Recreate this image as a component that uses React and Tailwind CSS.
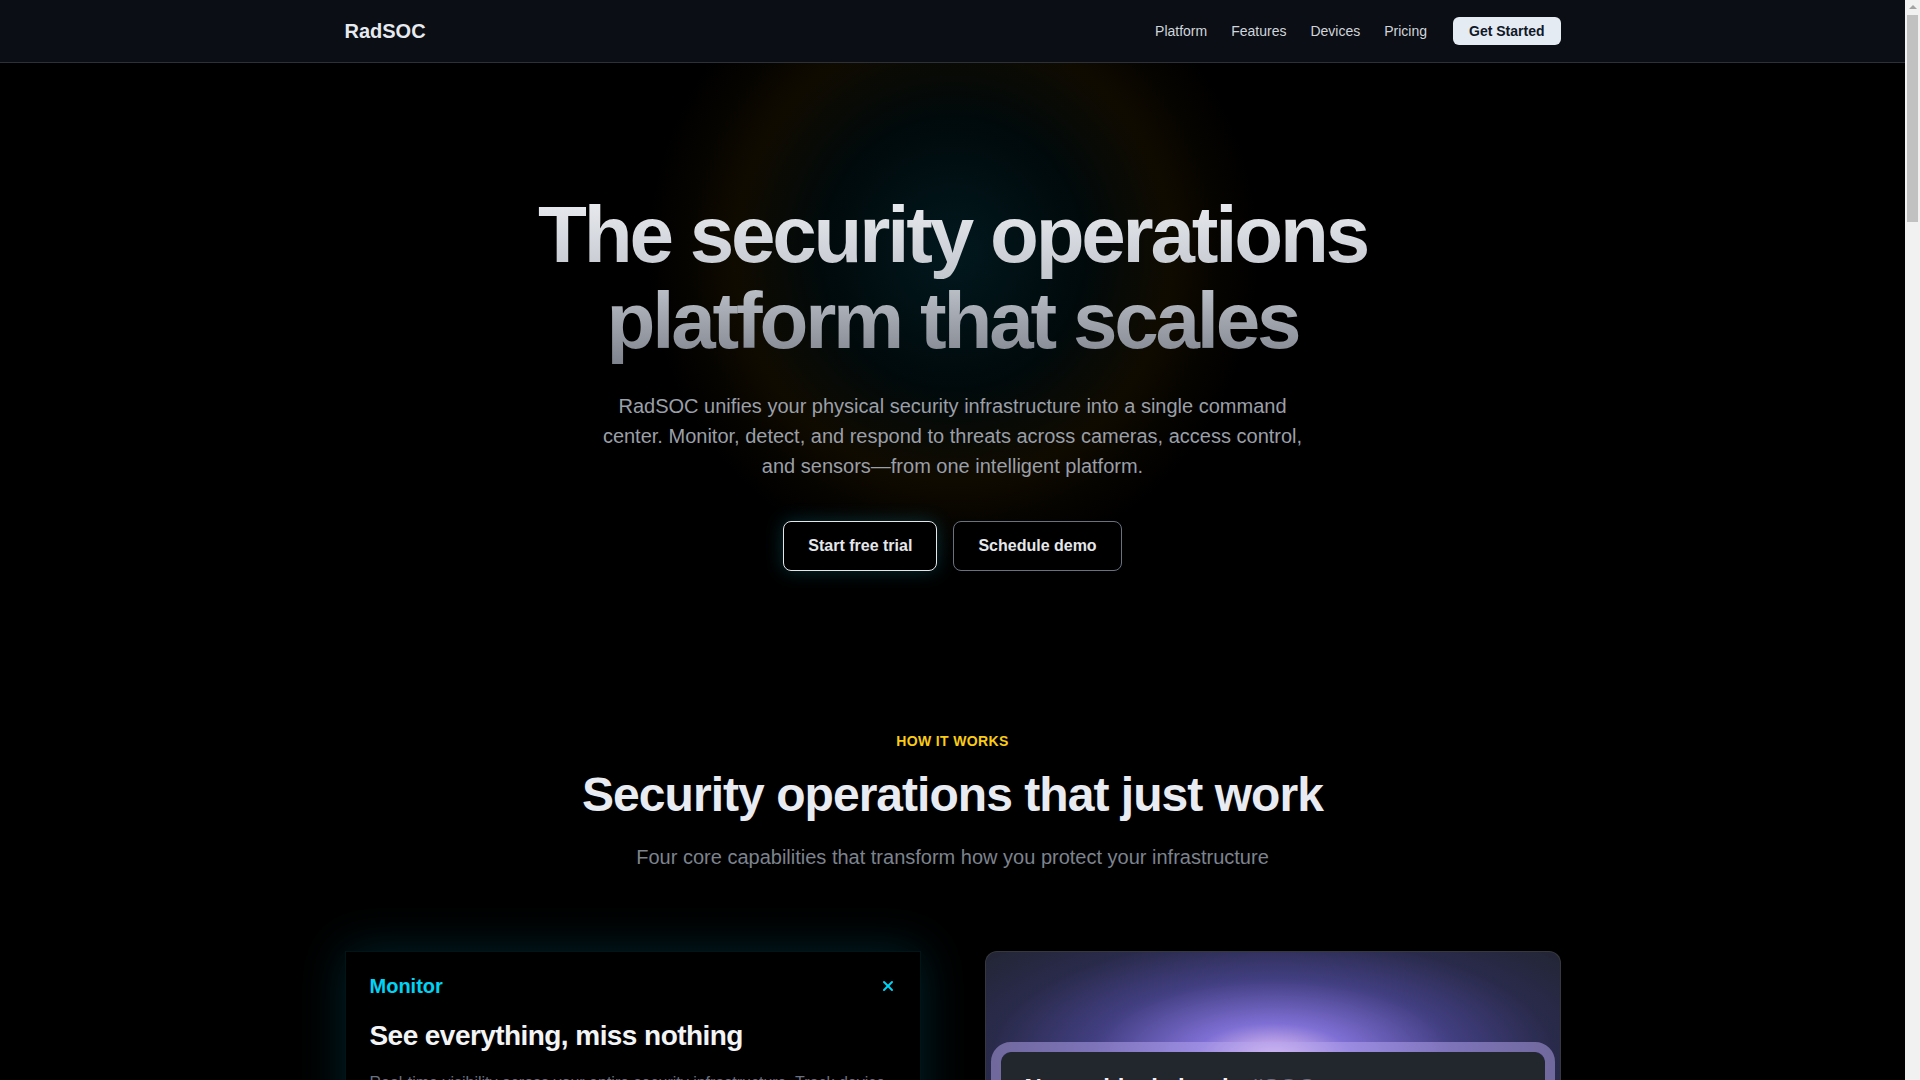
import { X } from 'lucide-react'

const navLinks = ['Platform', 'Features', 'Devices', 'Pricing']

function Header() {
  return (
    <header className="border-b border-[#2b3039] bg-[#0b0e14]">
      <div className="mx-auto flex h-[62px] max-w-7xl items-center justify-between px-8">
        <span className="text-xl font-bold text-[#e6eaf0]">RadSOC</span>
        <nav className="flex items-center gap-6 text-sm text-gray-300">
          {navLinks.map(link => (
            <a key={link} href="#" className="hover:text-white">{link}</a>
          ))}
          <button className="ml-0.5 rounded-md bg-[#e5ebf2] px-4 py-1 text-sm font-bold text-gray-900">
            Get Started
          </button>
        </nav>
      </div>
    </header>
  )
}

function Hero() {
  return (
    <section className="relative overflow-hidden pt-[129px] pb-[160px] text-center">
      {/* glow behind the headline */}
      <div className="pointer-events-none absolute left-1/2 top-[-130px] h-[640px] w-[620px] -translate-x-1/2 bg-[radial-gradient(ellipse_at_50%_50%,rgba(8,145,178,0.17)_0%,rgba(8,120,140,0.08)_30%,rgba(202,138,4,0.08)_50%,rgba(202,138,4,0.03)_60%,transparent_70%)]" />
      <div className="relative">
        <h1 className="mx-auto bg-linear-to-b from-[#eceef2] via-[#c3c7ce] to-[#7e838d] bg-clip-text text-[80px] font-bold leading-[86px] tracking-[-0.04em] text-transparent">
          The security operations
          <br />
          platform that scales
        </h1>
        <p className="mx-auto mt-[27px] max-w-[720px] text-xl leading-normal text-[#9a9fa8]">
          RadSOC unifies your physical security infrastructure into a single command center. Monitor, detect, and respond to threats across cameras, access control, and sensors—from one intelligent platform.
        </p>
        <div className="mt-10 flex justify-center gap-4">
          <button className="rounded-lg border border-gray-200 bg-black px-6 py-3 text-base font-bold text-gray-200 shadow-[0_0_18px_rgba(34,211,238,0.22)]">
            Start free trial
          </button>
          <button className="rounded-lg border border-gray-500 bg-black px-6 py-3 text-base font-bold text-gray-200">
            Schedule demo
          </button>
        </div>
      </div>
    </section>
  )
}

function MonitorCard() {
  return (
    <div className="border border-cyan-400/10 bg-black px-6 pt-5 pb-8 shadow-[0_0_44px_rgba(8,145,178,0.24)]">
      <div className="flex items-center justify-between">
        <h3 className="text-xl font-bold text-cyan-400">Monitor</h3>
        <X className="h-4 w-4 text-cyan-400" strokeWidth={3} />
      </div>
      <h4 className="mt-[18px] text-[28px] font-bold leading-9 tracking-[-0.02em] text-gray-100">
        See everything, miss nothing
      </h4>
      <p className="mt-4 text-base leading-relaxed text-gray-500">
        Real-time visibility across your entire security infrastructure. Track device health, camera feeds, and sensor status from a single unified dashboard.
      </p>
      <ul className="mt-6 space-y-3 text-sm text-gray-400">
        <li>Live camera wall with smart layouts</li>
        <li>Device health and uptime tracking</li>
        <li>Unified map of every site</li>
      </ul>
    </div>
  )
}

function AlertCard() {
  return (
    <div className="relative overflow-hidden rounded-xl border border-white/10 bg-[#1f2228] px-[5px] pt-[90px] pb-[5px]">
      <div className="pointer-events-none absolute inset-x-0 top-0 h-[130px] bg-[radial-gradient(ellipse_75%_140%_at_50%_80%,rgba(240,205,255,0.95)_0%,rgba(150,130,255,0.8)_18%,rgba(90,82,190,0.6)_42%,rgba(50,50,105,0.55)_65%,rgba(31,34,40,0)_100%)]" />
      <div className="relative rounded-[20px] border-[10px] border-[#b8a8f0]/50">
        <div className="rounded-[12px] bg-[#22262d] px-6 pt-5 pb-8">
          <p className="text-2xl font-semibold text-gray-100">
            New critical alert in <span className="text-gray-500">#SOC</span>
          </p>
          <p className="mt-3 text-sm leading-relaxed text-gray-400">
            Motion detected at Loading Dock B after hours. Camera 14 flagged an unrecognized person near the east entrance.
          </p>
          <div className="mt-5 flex gap-3">
            <span className="rounded-md bg-violet-500/20 px-3 py-1 text-xs font-bold text-violet-200">Acknowledge</span>
            <span className="rounded-md bg-white/5 px-3 py-1 text-xs font-bold text-gray-300">View feed</span>
          </div>
        </div>
      </div>
    </div>
  )
}

function HowItWorks() {
  return (
    <section className="pb-32">
      <div className="mx-auto max-w-7xl px-8">
        <div className="text-center">
          <p className="text-sm font-bold uppercase tracking-wide text-[#facc15]">How it works</p>
          <h2 className="mt-5 text-5xl font-bold leading-none tracking-[-0.02em] text-[#e8ecf2]">
            Security operations that just work
          </h2>
          <p className="mt-6 text-xl text-[#7d838e]">
            Four core capabilities that transform how you protect your infrastructure
          </p>
        </div>
        <div className="mt-20 grid grid-cols-2 gap-16">
          <MonitorCard />
          <AlertCard />
        </div>
      </div>
    </section>
  )
}

// classic browser scrollbar, as it shows in the screenshot
function ScrollGutter() {
  return (
    <div className="flex w-[15px] shrink-0 flex-col items-center bg-[#f1f1f1]">
      <div className="mt-[5px] h-0 w-0 border-x-[4px] border-b-[4px] border-x-transparent border-b-[#a3a3a3]" />
      <div className="mt-[6px] h-[207px] w-[11px] bg-[#c1c1c1]" />
    </div>
  )
}

export default function App() {
  return (
    <div className="flex h-screen overflow-hidden bg-black font-['Liberation_Sans',Arial,sans-serif] text-gray-100">
      <main className="min-w-0 flex-1 overflow-y-auto [scrollbar-width:none]">
        <Header />
        <Hero />
        <HowItWorks />
      </main>
      <ScrollGutter />
    </div>
  )
}
